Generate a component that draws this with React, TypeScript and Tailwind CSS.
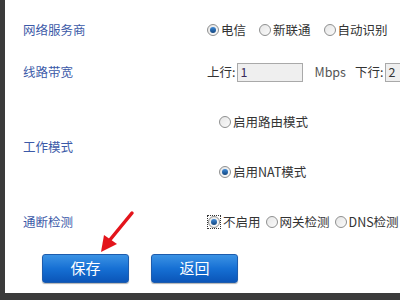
import React from "react";

const cjk = { fontFamily: '"Noto Sans CJK SC", "DejaVu Sans", sans-serif' };

function Radio({ checked = false, focus = false }: { checked?: boolean; focus?: boolean }) {
  const dot = (
    <span className="grid h-[12px] w-[12px] place-items-center rounded-full border border-[#8e8f8f] bg-gradient-to-br from-[#e6e6e6] to-[#fafafa]">
      {checked ? <span className="h-[6px] w-[6px] rounded-full bg-gradient-to-b from-[#3e8ad8] to-[#12467f]" /> : null}
    </span>
  );
  if (focus) return <span className="inline-grid place-items-center border border-dotted border-[#333]">{dot}</span>;
  return dot;
}

function Opt({ label, checked, focus }: { label: string; checked?: boolean; focus?: boolean }) {
  return (
    <span className="flex items-center gap-[2px]">
      <Radio checked={checked} focus={focus} />
      <span>{label}</span>
    </span>
  );
}

function Row({ label, h, children }: { label: string; h: string; children: React.ReactNode }) {
  return (
    <div className={"flex items-center " + h}>
      <div className="w-[202px] shrink-0 pl-[18px] text-[#3c5aa8]">{label}</div>
      <div className="flex-1 text-[#333]">{children}</div>
    </div>
  );
}

export default function App() {
  return (
    <div className="relative flex h-[300px] w-[400px] flex-col overflow-hidden bg-[#3b3b3b] text-[12.5px]" style={cjk}>
      <div className="ml-[5px] flex h-[293px] flex-col bg-white pt-[8px]">
        <Row label="网络服务商" h="h-[44px]">
          <div className="flex items-center gap-[13px] whitespace-nowrap">
            <Opt label="电信" checked />
            <Opt label="新联通" />
            <Opt label="自动识别" />
          </div>
        </Row>
        <Row label="线路带宽" h="h-[40px]">
          <div className="flex items-center whitespace-nowrap">
            <span>上行:</span>
            <span className="ml-[2px] flex h-[19px] w-[66px] shrink-0 items-center border border-[#a9a9a9] bg-[#efefef] pl-[2px] text-[#3a2a5a]">1</span>
            <span className="ml-[11px] text-[#555]">Mbps</span>
            <span className="ml-[9px]">下行:</span>
            <span className="ml-[2px] flex h-[19px] w-[66px] shrink-0 items-center border border-[#a9a9a9] bg-[#efefef] pl-[2px]">2</span>
          </div>
        </Row>
        <Row label="工作模式" h="h-[110px]">
          <div className="flex flex-col gap-[31px] pl-[12px]">
            <Opt label="启用路由模式" />
            <Opt label="启用NAT模式" checked />
          </div>
        </Row>
        <Row label="通断检测" h="h-[40px]">
          <div className="flex items-center gap-[5px] whitespace-nowrap">
            <Opt label="不启用" checked focus />
            <Opt label="网关检测" />
            <Opt label="DNS检测" />
          </div>
        </Row>
        <div className="mt-[12px] flex gap-[22px] pl-[37px]">
          {["保存", "返回"].map((t) => (
            <button
              key={t}
              className="h-[29px] w-[87px] rounded-[3px] border border-[#1d5cad] bg-gradient-to-b from-[#3a92e4] via-[#1670d4] to-[#0b55b8] text-[15px] text-white shadow-[0_1px_1px_rgba(0,0,0,0.3)]"
            >
              {t}
            </button>
          ))}
        </div>
      </div>
      <svg className="absolute left-[96px] top-[208px]" width="42" height="48" viewBox="0 0 42 48">
        <path d="M36 5 L13 33" stroke="#e3141b" strokeWidth="3.5" strokeLinecap="round" />
        <path d="M5 44 L8 27 L21 36 Z" fill="#e3141b" />
      </svg>
    </div>
  );
}
